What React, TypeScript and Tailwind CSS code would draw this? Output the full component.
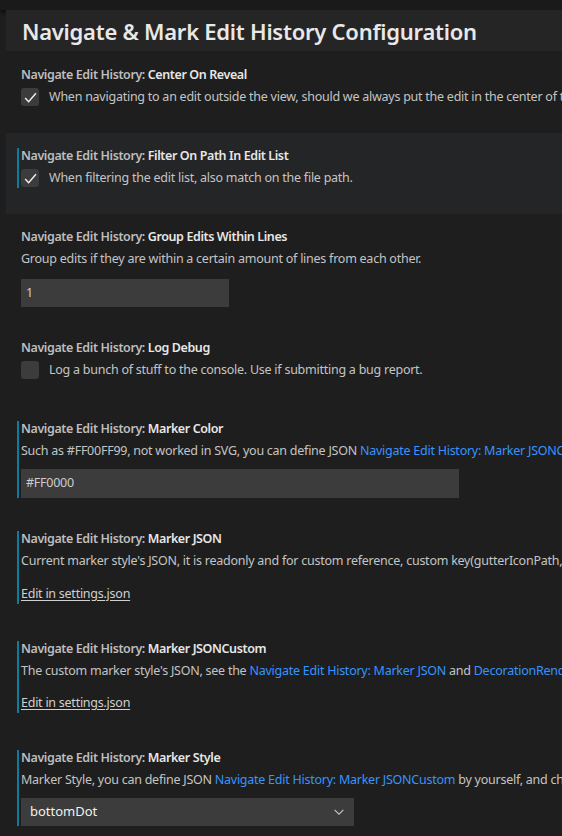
import type { ReactNode } from "react";

const FONT = { fontFamily: '"Noto Sans", "Open Sans", sans-serif' };

function Link({ children }: { children: ReactNode }) {
  return <span className="text-[#3794ff]">{children}</span>;
}

function Title({ name }: { name: string }) {
  return (
    <div className="h-5 leading-5 text-[12.5px] font-semibold tracking-[-0.4px]">
      <span className="text-[#bdbdbd]">Navigate Edit History: </span>
      <span className="text-[#e7e7e7]">{name}</span>
    </div>
  );
}

function Checkbox({ checked }: { checked: boolean }) {
  return (
    <div className="w-[18px] h-[18px] shrink-0 rounded-[3px] bg-[#3c3c3c] flex items-center justify-center">
      {checked && (
        <svg width="15" height="15" viewBox="0 0 16 16" fill="none">
          <path d="M2.3 8.6l3.7 4L13.8 3.4" stroke="#f2f2f2" strokeWidth="1.5" />
        </svg>
      )}
    </div>
  );
}

function Item({
  name,
  modified,
  focused,
  pb = "pb-5",
  children,
}: {
  name: string;
  modified?: boolean;
  focused?: boolean;
  pb?: string;
  children: ReactNode;
}) {
  return (
    <div className={`pl-[15px] pt-[13px] ${pb} ${focused ? "bg-[#242526]" : ""}`}>
      <div className="relative">
        {modified && <div className="absolute -left-[4px] top-[2px] bottom-0 w-[2px] bg-[#0c7d9d]" />}
        <Title name={name} />
        {children}
      </div>
    </div>
  );
}

function Desc({ children }: { children: ReactNode }) {
  return <div className="mt-[2px] h-5 leading-5 text-[12.5px] tracking-[-0.25px] text-[#c4c4c4]">{children}</div>;
}

function CheckRow({ checked, children }: { checked: boolean; children: ReactNode }) {
  return (
    <div className="mt-[2px] flex items-center gap-[10px] h-5 text-[12.5px] tracking-[-0.25px] text-[#c4c4c4]">
      <Checkbox checked={checked} />
      <span>{children}</span>
    </div>
  );
}

export default function App() {
  return (
    <div className="w-[562px] h-[836px] overflow-hidden bg-[#1e1e1e] whitespace-nowrap" style={FONT}>
      <div className="h-[10px] bg-[#1a1a1a] shadow-[0_2px_4px_#000000a0]" />
      <div className="ml-[6px] h-[41px] bg-[#252526] pl-[16px] flex items-center">
        <h1 className="text-[22px] font-semibold tracking-[-0.25px] text-[#e8e8e8] leading-none">
          Navigate &amp; Mark Edit History Configuration
        </h1>
      </div>
      <div className="ml-[6px] pt-[1px]">
        <Item name="Center On Reveal" pb="pb-[26px]">
          <CheckRow checked>
            When navigating to an edit outside the view, should we always put the edit in the center of the editor?
          </CheckRow>
        </Item>
        <Item name="Filter On Path In Edit List" modified focused pb="pb-[26px]">
          <CheckRow checked>When filtering the edit list, also match on the file path.</CheckRow>
        </Item>
        <Item name="Group Edits Within Lines" pb="pb-[18px]">
          <Desc>Group edits if they are within a certain amount of lines from each other.</Desc>
          <div className="mt-[10px] w-[208px] h-[28px] bg-[#3c3c3c] px-[5px] flex items-center text-[12.5px] text-[#cccccc]">
            1
          </div>
        </Item>
        <Item name="Log Debug" pb="pb-[26px]">
          <CheckRow checked={false}>Log a bunch of stuff to the console. Use if submitting a bug report.</CheckRow>
        </Item>
        <Item name="Marker Color" modified pb="pb-[18px]">
          <Desc>
            Such as #FF00FF99, not worked in SVG, you can define JSON <Link>Navigate Edit History: Marker JSONCustom</Link> by yourself.
          </Desc>
          <div className="mt-[8px] w-[438px] h-[29px] bg-[#3c3c3c] px-[5px] flex items-center text-[12.5px] tracking-[-0.25px] text-[#cccccc]">
            #FF0000
          </div>
        </Item>
        <Item name="Marker JSON" modified pb="pb-[22px]">
          <Desc>
            Current marker style's JSON, it is readonly and for custom reference, custom key(gutterIconPath, gutterIconSize) is supported.
          </Desc>
          <div className="mt-[13px] h-5 leading-5 text-[12.5px] tracking-[-0.25px] text-[#d0d0d0] underline underline-offset-2">
            Edit in settings.json
          </div>
        </Item>
        <Item name="Marker JSONCustom" modified pb="pb-[22px]">
          <Desc>
            The custom marker style's JSON, see the <Link>Navigate Edit History: Marker JSON</Link> and{" "}
            <Link>DecorationRenderOptions</Link> for reference.
          </Desc>
          <div className="mt-[12px] h-5 leading-5 text-[12.5px] tracking-[-0.25px] text-[#d0d0d0] underline underline-offset-2">
            Edit in settings.json
          </div>
        </Item>
        <Item name="Marker Style" modified>
          <Desc>
            Marker Style, you can define JSON <Link>Navigate Edit History: Marker JSONCustom</Link> by yourself, and choose custom.
          </Desc>
          <div className="mt-[8px] w-[333px] h-[28px] bg-[#3c3c3c] pl-[9px] pr-[8px] flex items-center justify-between text-[13px] text-[#f0f0f0]">
            <span>bottomDot</span>
            <svg width="14" height="14" viewBox="0 0 16 16" fill="none">
              <path d="M3 5.5l5 5 5-5" stroke="#c5c5c5" strokeWidth="1.3" />
            </svg>
          </div>
        </Item>
      </div>
    </div>
  );
}
